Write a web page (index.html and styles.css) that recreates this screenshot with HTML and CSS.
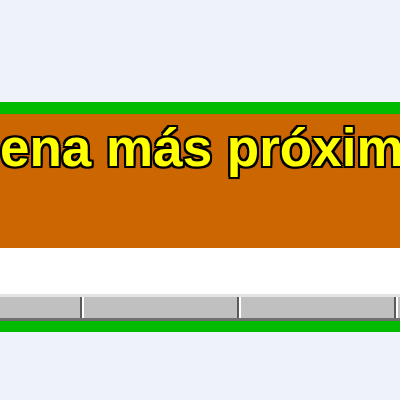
FILE: index.html
```html
<!DOCTYPE html>
<html lang="es">
<head>
<meta charset="utf-8">
<title>Banner</title>
<link rel="stylesheet" href="styles.css">
</head>
<body>
<div class="page">
  <div class="banner">
    <div class="headline"><span class="headline-text">ena más próxima</span></div>
    <div class="blank"></div>
    <div class="statusbar">
      <div class="panel"></div>
      <div class="panel"></div>
      <div class="panel"></div>
      <div class="panel"></div>
    </div>
  </div>
</div>
</body>
</html>
```

FILE: styles.css
```css
html, body {
  margin: 0;
  padding: 0;
  background: #eef2f9;
  overflow: hidden;
}

.page {
  width: 400px;
  height: 400px;
  padding-top: 102px;
  box-sizing: border-box;
}

.banner {
  border-top: 12px solid #00bb00;
  border-bottom: 11px solid #00bb00;
  background: #ffffff;
  overflow: hidden;
}

.headline {
  height: 134px;
  box-sizing: border-box;
  padding-top: 7px;
  background: #cc6600;
  white-space: nowrap;
  overflow: hidden;
}

.headline-text {
  display: block;
  margin-left: 0;
  font-family: "Liberation Sans", Arial, sans-serif;
  font-weight: bold;
  font-size: 53px;
  line-height: 53px;
  color: #ffff00;
  text-shadow:
    2px 0 0 #000, -2px 0 0 #000, 0 2px 0 #000, 0 -2px 0 #000,
    2px 2px 0 #000, -2px -2px 0 #000, 2px -2px 0 #000, -2px 2px 0 #000,
    0 0 3px #000;
}

.blank {
  height: 46px;
  background: #ffffff;
}

.statusbar {
  display: flex;
  height: 27px;
  box-sizing: border-box;
  border-top: 3px solid #e4e4e4;
  border-bottom: 3px solid #707070;
  background: #c0c0c0;
  margin-left: -75px;
}

.panel {
  flex: 0 0 157px;
  box-sizing: border-box;
  border-left: 2px solid #ffffff;
  border-right: 2px solid #5a5a5a;
}
```
